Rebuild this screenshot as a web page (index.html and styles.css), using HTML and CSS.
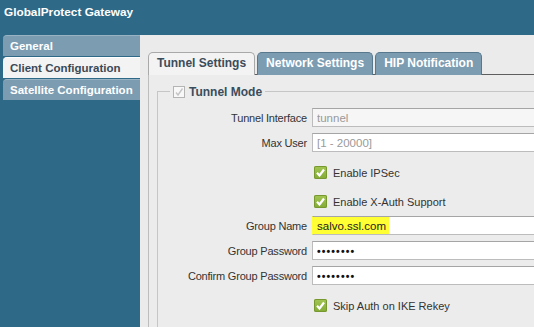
FILE: index.html
```html
<!DOCTYPE html>
<html lang="en">
<head>
  <meta charset="UTF-8">
  <title>GlobalProtect Gateway</title>
  <link rel="stylesheet" href="styles.css">
</head>
<body>
  <header class="header">GlobalProtect Gateway</header>
  <div class="main">
    <nav class="sidebar">
      <div class="nav-item">General</div>
      <div class="nav-item active">Client Configuration</div>
      <div class="nav-item">Satellite Configuration</div>
    </nav>
    <section class="content">
      <div class="tabs">
        <div class="tab active">Tunnel Settings</div>
        <div class="tab">Network Settings</div>
        <div class="tab">HIP Notification</div>
      </div>
      <div class="panel">
        <fieldset class="group">
          <legend class="legend">
            <span class="check disabled">
              <svg width="12" height="12" viewBox="0 0 12 12"><path d="M3 6.5 L5 9 L9.5 2.5" fill="none" stroke="#c4c4c4" stroke-width="1.4"/></svg>
            </span>
            Tunnel Mode
          </legend>
          <div class="form">
            <label class="label">Tunnel Interface</label>
            <input class="field disabled" type="text" value="tunnel" disabled>

            <label class="label">Max User</label>
            <input class="field" type="text" placeholder="[1 - 20000]">

            <div class="check-row">
              <span class="check on">
                <svg width="13" height="13" viewBox="0 0 13 13"><path d="M3 6.8 L5.5 9.5 L10 3.5" fill="none" stroke="#fff" stroke-width="2.2"/></svg>
              </span>
              Enable IPSec
            </div>

            <div class="check-row">
              <span class="check on">
                <svg width="13" height="13" viewBox="0 0 13 13"><path d="M3 6.8 L5.5 9.5 L10 3.5" fill="none" stroke="#fff" stroke-width="2.2"/></svg>
              </span>
              Enable X-Auth Support
            </div>

            <label class="label">Group Name</label>
            <input class="field marked" type="text" value="salvo.ssl.com">

            <label class="label">Group Password</label>
            <input class="field dots" type="text" value="••••••••">

            <label class="label">Confirm Group Password</label>
            <input class="field dots" type="text" value="••••••••">

            <div class="check-row">
              <span class="check on">
                <svg width="13" height="13" viewBox="0 0 13 13"><path d="M3 6.8 L5.5 9.5 L10 3.5" fill="none" stroke="#fff" stroke-width="2.2"/></svg>
              </span>
              Skip Auth on IKE Rekey
            </div>
          </div>
        </fieldset>
      </div>
    </section>
  </div>
</body>
</html>
```

FILE: styles.css
```css
body {
  margin: 0;
  padding: 0;
  width: 534px;
  height: 327px;
  overflow: hidden;
  font-family: 'Liberation Sans', Arial, sans-serif;
  font-size: 11px;
  color: #333;
  background: #2e6987;
  display: flex;
  flex-direction: column;
}

.header {
  height: 35px;
  box-sizing: border-box;
  padding: 5px 4px 0 4px;
  line-height: 14px;
  font-size: 11.8px;
  font-weight: bold;
  color: #fff;
  flex-shrink: 0;
}

.main {
  flex: 1;
  display: flex;
  min-height: 0;
}

.sidebar {
  width: 140px;
  flex-shrink: 0;
  box-sizing: border-box;
  padding-left: 3px;
  display: flex;
  flex-direction: column;
  gap: 1px;
}

.nav-item {
  height: 21px;
  line-height: 21px;
  padding-left: 7px;
  font-size: 11.5px;
  font-weight: bold;
  color: #fff;
  background: #7c9cb2;
  border-top: 1px solid #9ab3c4;
  box-sizing: border-box;
  border-radius: 4px 0 0 0;
}

.nav-item.active {
  background: #f3f3f3;
  color: #3a4856;
  border-top-color: #fff;
}

.content {
  flex: 1;
  background: #ebebeb;
  padding: 17px 0 0 8px;
  display: flex;
  flex-direction: column;
  min-width: 0;
}

.tabs {
  display: flex;
  gap: 2px;
  height: 22px;
  border-bottom: 1px solid #5e5e5e;
}

.tab {
  height: 23px;
  box-sizing: border-box;
  padding: 0 8px;
  line-height: 21px;
  font-size: 12px;
  font-weight: bold;
  color: #fff;
  background: #7c9cb2;
  border: 1px solid #58788e;
  border-bottom: none;
  border-radius: 5px 5px 0 0;
}

.tab.active {
  background: #f3f3f3;
  color: #3c4c5a;
  border-color: #a9a9a9;
  position: relative;
  z-index: 1;
}

.panel {
  flex: 1;
  background: #ececec;
  border-left: 1px solid #bdbdbd;
  overflow: hidden;
}

.group {
  margin: 10px -80px 0 8px;
  padding: 0 0 30px 0;
  border: 1px solid #c6c6c6;
}

.legend {
  margin-left: 12px;
  padding: 0 3px;
  display: flex;
  align-items: center;
  gap: 4px;
  font-size: 12px;
  font-weight: bold;
  color: #3b4d5c;
  height: 13px;
}

.check {
  display: inline-flex;
  box-sizing: border-box;
}

.check.disabled {
  width: 12px;
  height: 12px;
  border: 1px solid #b4b4b4;
  background: #f8f8f8;
}

.check.disabled svg {
  margin: -1px;
}

.check.on {
  width: 13px;
  height: 13px;
  border-radius: 2px;
  background: linear-gradient(#a4c653, #83ab36);
  box-shadow: inset 0 0 0 1px #77982f;
}

.form {
  margin-top: 7px;
  display: grid;
  grid-template-columns: 149px 1fr;
  grid-template-rows: 25px 25px 29px 29px 25px 25px 25px 29px;
  column-gap: 5px;
  align-items: center;
}

.label {
  text-align: right;
  color: #333;
  letter-spacing: -0.2px;
}

.field {
  height: 19px;
  box-sizing: border-box;
  width: 100%;
  margin: 0;
  padding: 0 4px;
  border: 1px solid #bcbcbc;
  border-top-color: #a5a5a5;
  background: #fff;
  font-family: 'Liberation Sans', Arial, sans-serif;
  font-size: 11.5px;
  color: #222;
  outline: none;
}

.field.disabled {
  background: #f6f6f6;
  color: #999;
}

.field::placeholder {
  color: #9a9a9a;
}

.field.marked {
  background: linear-gradient(to right, #ffff33 0 76px, #fff 76px);
  border-left-color: #ffff33;
}

.field.dots {
  font-weight: bold;
  font-size: 10.5px;
  letter-spacing: 1.1px;
  color: #111;
}

.check-row {
  grid-column: 2;
  height: 29px;
  box-sizing: border-box;
  padding: 6px 0 0 2px;
  display: flex;
  align-items: center;
  gap: 6px;
  color: #333;
}
```
